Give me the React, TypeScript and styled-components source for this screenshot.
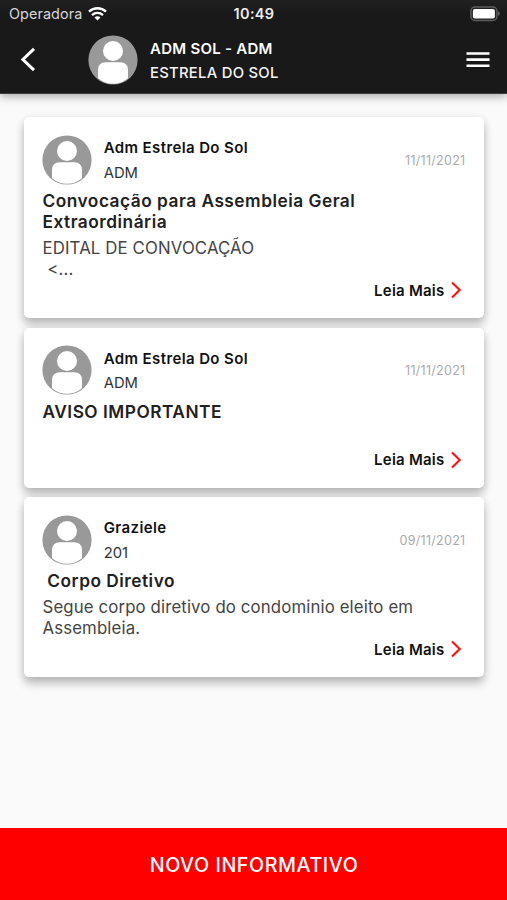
import React from "react";
import styled, { createGlobalStyle } from "styled-components";

const GlobalStyle = createGlobalStyle`
  * { box-sizing: border-box; }
  body { margin: 0; background: #fafafa; font-family: Inter, sans-serif; }
`;

const Screen = styled.div`
  display: flex;
  flex-direction: column;
  width: 507px;
  height: 900px;
  overflow: hidden;
  background: #fafafa;
`;

const Header = styled.header`
  position: relative;
  height: 94px;
  flex: none;
  background: linear-gradient(#212121, #191919 14px);
  color: #fff;
  border-bottom: 1px solid #3c3c3c;
  box-shadow: 0 2px 9px rgba(0, 0, 0, 0.36);
`;

const StatusBar = styled.div`
  display: grid;
  grid-template-columns: 1fr auto 1fr;
  align-items: center;
  height: 27px;
  padding: 0 7px 0 9px;
`;

const Carrier = styled.div`
  display: flex;
  align-items: center;
  gap: 6px;
  font-size: 14.4px;
  line-height: 20px;
  letter-spacing: 0.08px;
  color: #d6d6d6;
  padding-top: 1px;
`;

const Clock = styled.div`
  font-size: 14.5px;
  line-height: 20px;
  font-weight: 600;
  letter-spacing: 0.35px;
  color: #ededed;
  padding: 1px 1px 0 0;
`;

const BatterySlot = styled.div`
  display: flex;
  justify-content: flex-end;
`;

const NavBar = styled.div`
  display: flex;
  align-items: center;
  height: 65px;
  padding: 0 17px 0 20px;
`;

const IconButton = styled.button`
  display: flex;
  padding: 0;
  border: 0;
  background: none;
  color: inherit;
`;

const Account = styled.div`
  display: flex;
  align-items: center;
  flex: 1;
  gap: 12px;
  margin-left: 52px;
`;

const Names = styled.div<{ $inverse?: boolean }>`
  flex: 1;
  padding-top: 2px;
  font-size: 15px;
  line-height: ${(p) => (p.$inverse ? "24px" : "24.5px")};
  color: ${(p) => (p.$inverse ? "#f4f4f4" : "#333")};
`;

const Primary = styled.div<{ $inverse?: boolean }>`
  font-weight: 600;
  letter-spacing: ${(p) => (p.$inverse ? "0.26px" : "0.39px")};
  color: ${(p) => (p.$inverse ? "#fff" : "#111")};
`;

const Secondary = styled.div<{ $inverse?: boolean }>`
  font-size: 14.8px;
  font-weight: ${(p) => (p.$inverse ? 500 : 400)};
  letter-spacing: ${(p) => (p.$inverse ? "0.28px" : "0")};
`;

const List = styled.main`
  display: flex;
  flex-direction: column;
  flex: 1;
  gap: 9.5px;
  padding: 23px 23px 0 24px;
`;

const Card = styled.article`
  display: flex;
  flex-direction: column;
  padding: 18px 18px 17.5px 18.5px;
  background: #fff;
  border-radius: 5px;
  box-shadow: 0 7px 10px rgba(0, 0, 0, 0.2), 0 2px 9px rgba(0, 0, 0, 0.13);
`;

const CardHeader = styled.div`
  display: flex;
  align-items: center;
  gap: 12px;
  height: 49px;
  margin-left: -0.8px;
`;

const PostDate = styled.time`
  font-size: 12.5px;
  letter-spacing: 0.28px;
  margin-right: 0.6px;
  padding-top: 1px;
  color: #aaa;
`;

const Title = styled.h2`
  margin: 6px 0 5px;
  font-size: 17.3px;
  line-height: 21px;
  font-weight: 600;
  letter-spacing: 0.5px;
  white-space: pre-wrap;
  color: #212121;
`;

const Excerpt = styled.p`
  margin: 0;
  padding-top: 1px;
  min-height: 23px;
  font-size: 16.8px;
  line-height: 21px;
  letter-spacing: 0.13px;
  white-space: pre-wrap;
  color: #444;
`;

const ReadMore = styled.a`
  display: flex;
  align-items: center;
  align-self: flex-end;
  gap: 5px;
  height: 20.5px;
  margin-right: 4.5px;
  font-size: 15px;
  font-weight: 600;
  letter-spacing: 0.24px;
  color: #111;
`;

const CreateButton = styled.button`
  height: 72px;
  flex: none;
  border: 0;
  padding: 2px 0 0 1px;
  background: #ff0000;
  color: #fff;
  font: 500 19.7px/24px Inter, sans-serif;
  letter-spacing: 0.58px;
`;

const Drawing = styled.svg`
  display: block;
  flex: none;
`;

function Avatar() {
  return (
    <Drawing width="50" height="50" viewBox="0 0 50 50">
      <circle cx="25" cy="25" r="24.6" fill="#999" />
      <circle cx="25" cy="16" r="10" fill="#fff" />
      <path
        d="M10 43.2V35.3Q10 27.3 18 27.3H32Q40 27.3 40 35.3V43.2Q33 48.7 25 48.7Q17 48.7 10 43.2Z"
        fill="#fff"
      />
    </Drawing>
  );
}

function WifiIcon() {
  return (
    <Drawing width="19" height="15" viewBox="0 0 19 15" fill="none" stroke="#fff" strokeWidth="2.3">
      <path d="M1 4.7C5.9.1 13.1.1 18 4.7" />
      <path d="M4 8.1C7.2 5.2 11.8 5.2 15 8.1" />
      <path d="M6.5 10.4C8.2 8.9 10.8 8.9 12.5 10.4L9.5 13.5Z" fill="#fff" stroke="none" />
    </Drawing>
  );
}

function BatteryIcon() {
  return (
    <Drawing width="31" height="16" viewBox="0 0 31 16">
      <rect x="1.9" y="1" width="26" height="13.4" rx="4" fill="#222" stroke="#5c5c5c" strokeWidth="1.5" />
      <rect x="3.9" y="3" width="22" height="9.4" rx="2" fill="#fff" />
      <path d="M29 5.1Q31 5.8 31 7.6T29 10.1Z" fill="#5c5c5c" />
    </Drawing>
  );
}

function BackIcon() {
  return (
    <Drawing width="16" height="26" viewBox="0 0 16 26">
      <path d="M14 1.8L2.9 12.5L14 23.2" fill="none" stroke="#fff" strokeWidth="3" />
    </Drawing>
  );
}

function MenuIcon() {
  return (
    <Drawing width="24" height="18" viewBox="0 0 24 18">
      <path d="M.5 2.5H23.5M.5 8.6H23.5M.5 14.7H23.5" stroke="#fff" strokeWidth="2.6" />
    </Drawing>
  );
}

function ChevronIcon() {
  return (
    <Drawing width="12" height="18" viewBox="0 0 12 18">
      <path d="M2 1.4L9.7 9L2 16.6" fill="none" stroke="#ff1010" strokeWidth="2.1" />
    </Drawing>
  );
}

interface Post {
  author: string;
  unit: string;
  date: string;
  title: string;
  excerpt: string;
}

const posts: Post[] = [
  {
    author: "Adm Estrela Do Sol",
    unit: "ADM",
    date: "11/11/2021",
    title: "Convocação para Assembleia Geral\nExtraordinária",
    excerpt: "EDITAL DE CONVOCAÇÃO\n <...",
  },
  {
    author: "Adm Estrela Do Sol",
    unit: "ADM",
    date: "11/11/2021",
    title: "AVISO IMPORTANTE",
    excerpt: "",
  },
  {
    author: "Graziele",
    unit: "201",
    date: "09/11/2021",
    title: " Corpo Diretivo",
    excerpt: "Segue corpo diretivo do condominio eleito em\nAssembleia.",
  },
];

export default function App() {
  return (
    <Screen>
      <GlobalStyle />
      <Header>
        <StatusBar>
          <Carrier>
            Operadora
            <WifiIcon />
          </Carrier>
          <Clock>10:49</Clock>
          <BatterySlot>
            <BatteryIcon />
          </BatterySlot>
        </StatusBar>
        <NavBar>
          <IconButton aria-label="Voltar">
            <BackIcon />
          </IconButton>
          <Account>
            <Avatar />
            <Names $inverse>
              <Primary $inverse>ADM SOL - ADM</Primary>
              <Secondary $inverse>ESTRELA DO SOL</Secondary>
            </Names>
          </Account>
          <IconButton aria-label="Menu">
            <MenuIcon />
          </IconButton>
        </NavBar>
      </Header>
      <List>
        {posts.map((post, index) => (
          <Card key={index}>
            <CardHeader>
              <Avatar />
              <Names>
                <Primary>{post.author}</Primary>
                <Secondary>{post.unit}</Secondary>
              </Names>
              <PostDate>{post.date}</PostDate>
            </CardHeader>
            <Title>{post.title}</Title>
            <Excerpt>{post.excerpt}</Excerpt>
            <ReadMore>
              Leia Mais
              <ChevronIcon />
            </ReadMore>
          </Card>
        ))}
      </List>
      <CreateButton>NOVO INFORMATIVO</CreateButton>
    </Screen>
  );
}
